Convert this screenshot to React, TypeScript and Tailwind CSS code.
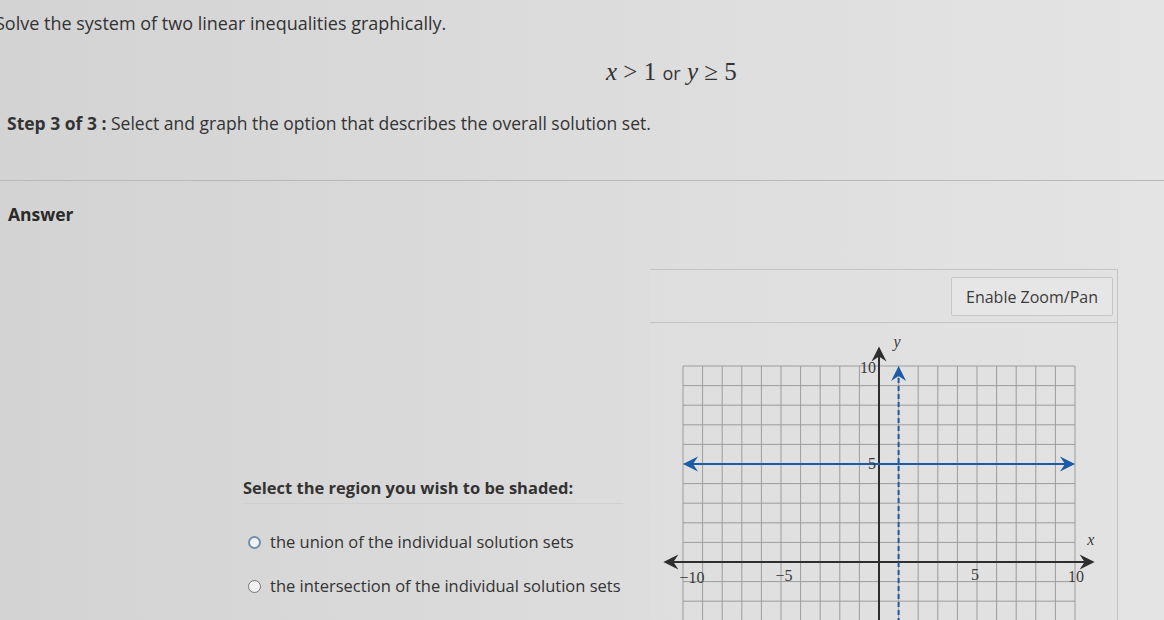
import React from "react";

const OX = 229;
const OY = 239;
const U = 19.6;
const px = (x: number) => OX + x * U;
const py = (y: number) => OY - y * U;

function Arrow({ x, y, angle, color }: { x: number; y: number; angle: number; color: string }) {
  return (
    <path
      d="M0 0 L-15 -7.5 L-10 0 L-15 7.5 Z"
      fill={color}
      transform={`translate(${x} ${y}) rotate(${angle})`}
    />
  );
}

function Graph() {
  const xs = Array.from({ length: 21 }, (_, i) => i - 10);
  const ys = Array.from({ length: 14 }, (_, i) => i - 3);
  const grid = "#9c9c9c";
  const axis = "#2e2e2e";
  const blue = "#1d5ba6";
  return (
    <svg width="466" height="300" className="block">
      {xs.map((x) => (
        <line key={"v" + x} x1={px(x)} y1={py(10)} x2={px(x)} y2={300} stroke={grid} strokeWidth={1} />
      ))}
      {ys.map((y) => (
        <line key={"h" + y} x1={px(-10)} y1={py(y)} x2={px(10)} y2={py(y)} stroke={grid} strokeWidth={1} />
      ))}
      <line x1={px(-10.9)} y1={OY} x2={px(10.9)} y2={OY} stroke={axis} strokeWidth={2} />
      <Arrow x={px(-11)} y={OY} angle={180} color={axis} />
      <Arrow x={px(11)} y={OY} angle={0} color={axis} />
      <line x1={OX} y1={300} x2={OX} y2={py(10.9)} stroke={axis} strokeWidth={2} />
      <Arrow x={OX} y={py(11)} angle={-90} color={axis} />
      <line x1={px(-9.6)} y1={py(5)} x2={px(9.6)} y2={py(5)} stroke={blue} strokeWidth={2} />
      <Arrow x={px(-10)} y={py(5)} angle={180} color={blue} />
      <Arrow x={px(10)} y={py(5)} angle={0} color={blue} />
      <line x1={px(1)} y1={300} x2={px(1)} y2={py(9.6)} stroke={blue} strokeWidth={2} strokeDasharray="5 3" />
      <Arrow x={px(1)} y={py(10)} angle={-90} color={blue} />
      <g fontFamily="'Liberation Serif', serif" fontSize="16" fill="#3a3a3a">
        <text x={OX - 3} y={py(10) + 7} textAnchor="end">10</text>
        <text x={OX - 3} y={py(5) + 5} textAnchor="end">5</text>
        <text x={px(-10) + 9} y={OY + 21} textAnchor="middle">−10</text>
        <text x={px(-5) + 3} y={OY + 19} textAnchor="middle">−5</text>
        <text x={px(5) - 2} y={OY + 18} textAnchor="middle">5</text>
        <text x={px(10) + 1} y={OY + 20} textAnchor="middle">10</text>
        <text x={px(10.8)} y={OY - 17} fontStyle="italic" textAnchor="middle">x</text>
        <text x={OX + 18} y={py(11.3) + 6} fontStyle="italic" textAnchor="middle">y</text>
      </g>
    </svg>
  );
}

function Radio({ label, focused }: { label: string; focused?: boolean }) {
  return (
    <div className="flex items-center gap-[9px]">
      <span
        className={
          focused
            ? "w-[13px] h-[13px] rounded-full border-2 border-[#6d8fb0] bg-[#f2f2f2]"
            : "w-[13px] h-[13px] rounded-full border-[1.5px] border-[#777] bg-[#f2f2f2]"
        }
      />
      <span>{label}</span>
    </div>
  );
}

export default function App() {
  return (
    <div className="w-[1164px] h-[620px] overflow-hidden bg-gradient-to-r from-[#d3d3d3] via-[#dcdcdc] to-[#e4e4e4] text-[#333] font-['Open_Sans',sans-serif]">
      <div className="pt-[12px] -ml-[5px] text-[18px] leading-[22px] whitespace-nowrap">
        Solve the system of two linear inequalities graphically.
      </div>
      <div className="mt-[23px] pl-[606px] text-[25px] leading-[30px] font-['Liberation_Serif',serif] text-[#333] whitespace-nowrap">
        <i>x</i> &gt; 1 <span className="font-['Open_Sans',sans-serif] text-[18px]">or</span> <i>y</i> ≥ 5
      </div>
      <div className="mt-[24px] pl-[7px] text-[17.5px] leading-[22px] whitespace-nowrap">
        <span className="font-bold">Step 3 of 3 :</span> Select and graph the option that describes the overall solution set.
      </div>
      <div className="mt-[46px] border-t border-[#b8b8b8] flex">
        <div className="w-[650px] shrink-0">
          <div className="pt-[22px] pl-[8px] text-[17.5px] leading-[22px] font-bold text-[#2a2a2a]">Answer</div>
          <div className="mt-[252px] pl-[243px] text-[16.5px] leading-[22px]">
            <div className="font-bold pb-[4px] border-b border-[#d0d0d0] w-[380px] whitespace-nowrap">
              Select the region you wish to be shaded:
            </div>
            <div className="mt-[27px] pl-[5px] flex flex-col gap-[22px] whitespace-nowrap">
              <Radio label="the union of the individual solution sets" focused />
              <Radio label="the intersection of the individual solution sets" />
            </div>
          </div>
        </div>
        <div className="mt-[88px] w-[468px] border-t border-r border-[#c4c4c4] bg-[#e2e2e2]/40">
          <div className="h-[53px] flex items-start justify-end pt-[7px] pr-[4px] border-b border-[#c4c4c4]">
            <button className="h-[39px] w-[162px] border border-[#c6c6c6] rounded-[2px] bg-[#e6e6e6] text-[16px] text-[#3b3b3b]">
              Enable Zoom/Pan
            </button>
          </div>
          <Graph />
        </div>
      </div>
    </div>
  );
}
